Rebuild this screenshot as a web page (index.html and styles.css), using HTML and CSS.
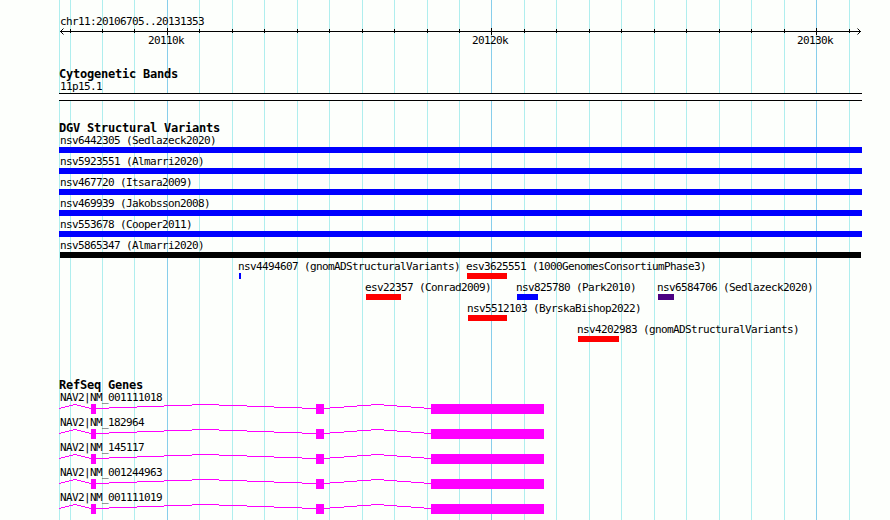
FILE: index.html
```html
<!DOCTYPE html>
<html>
<head>
    <meta charset="utf-8">
    <title>chr11:20106705..20131353</title>
    <link rel="stylesheet" href="styles.css">
</head>
<body>

<div class="browser">

    <!-- Vertical grid behind all tracks -->
    <svg class="grid" width="803" height="520">
        <path class="grid-minor" d="M.5 0v520M11.5 0v520M43.5 0v520M75.5 0v520M140.5 0v520M173.5 0v520M205.5 0v520M238.5 0v520M270.5 0v520M303.5 0v520M335.5 0v520M368.5 0v520M400.5 0v520M465.5 0v520M497.5 0v520M530.5 0v520M562.5 0v520M595.5 0v520M627.5 0v520M660.5 0v520M692.5 0v520M725.5 0v520M790.5 0v520"/>
        <path class="grid-major" d="M108.5 0v520M432.5 0v520M757.5 0v520"/>
    </svg>

    <!-- Scale -->
    <div class="scale">
        <div class="label">chr11:20106705..20131353</div>
        <svg class="axis" width="803" height="8">
            <path class="axis-line" d="M1 3.5H802M11.5 1v4M43.5 1v4M75.5 1v4M140.5 1v4M173.5 1v4M205.5 1v4M238.5 1v4M270.5 1v4M303.5 1v4M335.5 1v4M368.5 1v4M400.5 1v4M465.5 1v4M497.5 1v4M530.5 1v4M562.5 1v4M595.5 1v4M627.5 1v4M660.5 1v4M692.5 1v4M725.5 1v4M790.5 1v4M108.5 0v7M432.5 0v7M757.5 0v7"/>
            <path class="axis-arrow" d="M4.5 .5l-3 3 3 3M798.5 .5l3 3-3 3"/>
        </svg>
        <div class="row ticks">
            <span class="tick" style="margin-left: 89px">20110k</span>
            <span class="tick" style="margin-left: 413px">20120k</span>
            <span class="tick" style="margin-left: 738px">20130k</span>
        </div>
    </div>

    <!-- Cytogenetic Bands -->
    <div class="track bands">
        <h2>Cytogenetic Bands</h2>
        <div class="label">11p15.1</div>
        <div class="band"></div>
    </div>

    <!-- DGV Structural Variants -->
    <div class="track variants">
        <h2>DGV Structural Variants</h2>
        <div class="row"><div class="feature full"><span>nsv6442305 (Sedlazeck2020)</span><div class="bar gain"></div></div></div>
        <div class="row"><div class="feature full"><span>nsv5923551 (Almarri2020)</span><div class="bar gain"></div></div></div>
        <div class="row"><div class="feature full"><span>nsv467720 (Itsara2009)</span><div class="bar gain"></div></div></div>
        <div class="row"><div class="feature full"><span>nsv469939 (Jakobsson2008)</span><div class="bar gain"></div></div></div>
        <div class="row"><div class="feature full"><span>nsv553678 (Cooper2011)</span><div class="bar gain"></div></div></div>
        <div class="row"><div class="feature full"><span>nsv5865347 (Almarri2020)</span><div class="bar complex"></div></div></div>
        <div class="row">
            <div class="feature" style="margin-left: 179px"><span>nsv4494607 (gnomADStructuralVariants)</span><div class="bar gain" style="width: 2px"></div></div>
            <div class="feature" style="margin-left: 407px"><span>esv3625551 (1000GenomesConsortiumPhase3)</span><div class="bar loss" style="width: 40px"></div></div>
        </div>
        <div class="row">
            <div class="feature" style="margin-left: 306px"><span>esv22357 (Conrad2009)</span><div class="bar loss" style="width: 35px"></div></div>
            <div class="feature" style="margin-left: 457px"><span>nsv825780 (Park2010)</span><div class="bar gain" style="width: 21px"></div></div>
            <div class="feature" style="margin-left: 598px"><span>nsv6584706 (Sedlazeck2020)</span><div class="bar inversion" style="width: 16px"></div></div>
        </div>
        <div class="row">
            <div class="feature" style="margin-left: 408px"><span>nsv5512103 (ByrskaBishop2022)</span><div class="bar loss" style="width: 39px"></div></div>
        </div>
        <div class="row">
            <div class="feature" style="margin-left: 518px"><span>nsv4202983 (gnomADStructuralVariants)</span><div class="bar loss" style="width: 41px"></div></div>
        </div>
    </div>

    <!-- RefSeq Genes -->
    <div class="track genes">
        <h2>RefSeq Genes</h2>
        <div class="gene">
            <div class="label">NAV2|NM_001111018</div>
            <svg width="803" height="10">
                <g id="transcript">
                    <path class="intron" d="M0 4.5h2m0-1h4m0-1h4m0-1h4m0-1h4m0 1h4m0 1h4m0 1h4m0 1h2"/>
                    <path class="intron" d="M37 4.5H50m0-1H78m0-1H105m0-1H133m0-1H160m0 1H188m0 1H215m0 1H243m0 1H257"/>
                    <path class="intron" d="M265 4.5H271m0-1H285m0-1H298m0-1H312m0-1H325m0 1H338m0 1H352m0 1H365m0 1H372"/>
                    <path class="exon" d="M32 0h5v10h-5zM257 0h8v10h-8zM372 0h113v10H372z"/>
                </g>
            </svg>
        </div>
        <div class="gene">
            <div class="label">NAV2|NM_182964</div>
            <svg width="803" height="10"><use href="#transcript"/></svg>
        </div>
        <div class="gene">
            <div class="label">NAV2|NM_145117</div>
            <svg width="803" height="10"><use href="#transcript"/></svg>
        </div>
        <div class="gene">
            <div class="label">NAV2|NM_001244963</div>
            <svg width="803" height="10"><use href="#transcript"/></svg>
        </div>
        <div class="gene">
            <div class="label">NAV2|NM_001111019</div>
            <svg width="803" height="10"><use href="#transcript"/></svg>
        </div>
    </div>

</div>

</body>
</html>
```
FILE: styles.css
```css
body {
    margin: 0;
    background-color: #fdfffc;
    color: #000;
    font-family: "DejaVu Sans Mono", monospace;
    font-size: 11px;
    line-height: 12px;
    letter-spacing: -0.622px;
    white-space: nowrap;
}

svg {
    display: block;
    shape-rendering: crispEdges;
}

.browser {
    position: relative;
    width: 803px;
    height: 520px;
    margin-left: 59px;
}

.grid {
    position: absolute;
    top: 0;
    left: 0;
    z-index: -1;
}

.grid-minor {
    stroke: #afeeee;
}

.grid-major {
    stroke: #87ceeb;
}

.label {
    height: 12px;
    padding-left: 1px;
}

/* Items in a row share one cell, each offset by its start position */
.row {
    display: grid;
}

.row > * {
    grid-area: 1 / 1;
}

/* Scale */
.scale {
    box-sizing: border-box;
    height: 68px;
    padding-top: 16px;
}

.axis-line {
    fill: none;
    stroke: #000;
}

.axis-arrow {
    fill: none;
    stroke: #000;
    shape-rendering: auto;
}

.ticks {
    margin-top: -1px;
}

/* Tracks */
.track h2 {
    margin: 0;
    height: 13px;
    font-size: 12px;
    line-height: 12px;
    letter-spacing: -0.224px;
}

.bands {
    height: 54px;
}

.band {
    height: 6px;
    border-top: 1px solid #000;
    border-bottom: 1px solid #000;
    background-color: #fff;
}

.variants {
    height: 257px;
}

.variants .row {
    height: 21px;
}

.feature span {
    display: block;
    height: 12px;
}

.feature .bar {
    height: 6px;
    margin-left: 1px;
}

.feature.full span {
    padding-left: 1px;
}

.feature.full .bar {
    margin-left: 0;
}

.bar.gain {
    background-color: #00f;
}

.bar.loss {
    background-color: #f00;
}

.bar.inversion {
    background-color: #4b0082;
}

.feature.full .bar.complex {
    margin: 0 1px;
    background-color: #000;
}

/* Genes */
.gene {
    height: 25px;
}

.intron {
    fill: none;
    stroke: #f0f;
}

.exon {
    fill: #f0f;
}
```
